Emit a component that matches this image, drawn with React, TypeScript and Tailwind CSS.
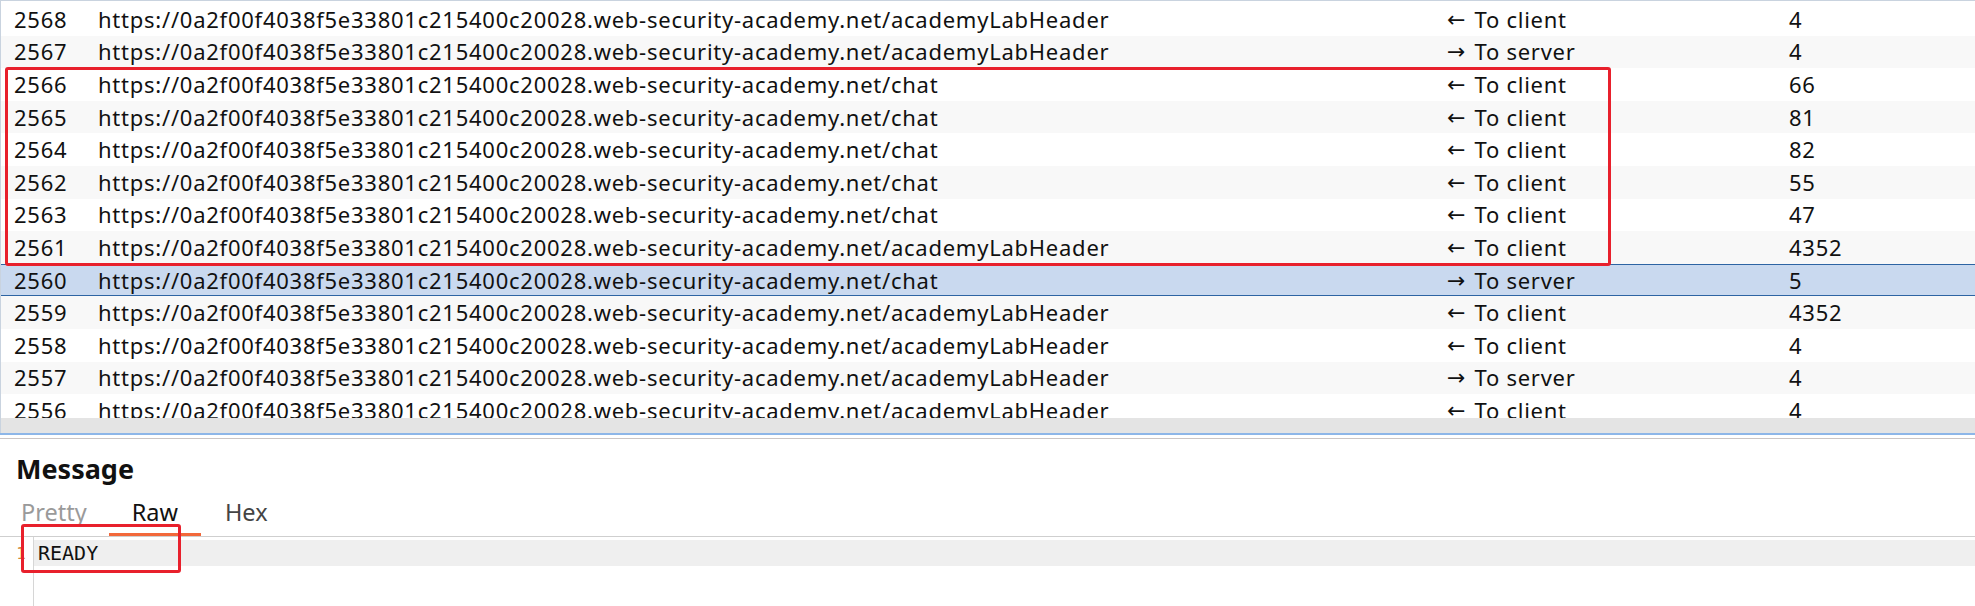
import React from 'react'

const HOST = 'https://0a2f00f4038f5e33801c215400c20028.web-security-academy.net'

type Row = { id: number; path: string; dir: 'in' | 'out'; len: number }

const ROWS: Row[] = [
  { id: 2568, path: '/academyLabHeader', dir: 'in', len: 4 },
  { id: 2567, path: '/academyLabHeader', dir: 'out', len: 4 },
  { id: 2566, path: '/chat', dir: 'in', len: 66 },
  { id: 2565, path: '/chat', dir: 'in', len: 81 },
  { id: 2564, path: '/chat', dir: 'in', len: 82 },
  { id: 2562, path: '/chat', dir: 'in', len: 55 },
  { id: 2563, path: '/chat', dir: 'in', len: 47 },
  { id: 2561, path: '/academyLabHeader', dir: 'in', len: 4352 },
  { id: 2560, path: '/chat', dir: 'out', len: 5 },
  { id: 2559, path: '/academyLabHeader', dir: 'in', len: 4352 },
  { id: 2558, path: '/academyLabHeader', dir: 'in', len: 4 },
  { id: 2557, path: '/academyLabHeader', dir: 'out', len: 4 },
  { id: 2556, path: '/academyLabHeader', dir: 'in', len: 4 },
]

const SELECTED = 2560

function HistoryRow({ row, index }: { row: Row; index: number }) {
  const selected = row.id === SELECTED
  const bg = selected
    ? 'bg-[#c9d9ef] border-y border-[#2d64a3]'
    : index % 2 === 1
      ? 'bg-[#f8f8f8]'
      : 'bg-white'
  return (
    <div className={`flex items-center h-[32.6px] shrink-0 pl-[13px] ${bg}`}>
      <div className="w-[84px]">{row.id}</div>
      <div className="w-[1349px] whitespace-nowrap">{HOST + row.path}</div>
      <div className="w-[342px] whitespace-nowrap flex items-center">
        <span className="font-['DejaVu_Sans',sans-serif] text-[22px] tracking-normal mr-[9px]">
          {row.dir === 'in' ? '←' : '→'}
        </span>
        {row.dir === 'in' ? 'To client' : 'To server'}
      </div>
      <div>{row.len}</div>
    </div>
  )
}

export default function App() {
  return (
    <div className="w-[1975px] h-[606px] bg-white overflow-hidden text-[#111] font-['Noto_Sans',sans-serif]">
      {/* history table */}
      <div className="border-l border-t border-[#c9d3df]">
        <div className="relative h-[417px] overflow-hidden pt-[2px] flex flex-col text-[22px] tracking-[0.75px]">
          {ROWS.map((r, i) => (
            <HistoryRow key={r.id} row={r} index={i} />
          ))}
          {/* annotation */}
          <div className="absolute left-[4px] top-[66px] w-[1606px] h-[199px] border-[3px] border-[#e8202c] rounded-[3px]" />
        </div>
        <div className="h-[15px] bg-[#e4e4e4]" />
      </div>
      <div className="h-[2px] bg-[#8db6e8]" />
      <div className="h-[3px]" />
      <div className="h-px bg-[#cbc5c5]" />

      {/* message panel */}
      <div className="relative">
        <div className="pl-[16px] pt-[14px] h-[50px] text-[27px] font-bold leading-none flex items-start">
          <span className="mt-[2px]">Message</span>
        </div>
        <div className="flex text-[23.5px] h-[48px] items-center border-b border-[#cfcfcf]">
          <div className="pl-[21px] pr-[22px] h-full flex items-center text-[#9a9a9a]">Pretty</div>
          <div className="px-[23px] h-full flex items-center relative">
            Raw
            <div className="absolute left-0 right-0 bottom-0 h-[3px] bg-[#f2683a]" />
          </div>
          <div className="px-[24px] h-full flex items-center text-[#444]">Hex</div>
        </div>
        <div className="flex h-[80px]">
          <div className="w-[34px] border-r border-[#d6d6d6] text-[16px] text-right pr-[7px] pt-[5px] text-[#d08a3a] font-['DejaVu_Sans_Mono',monospace]">
            1
          </div>
          <div className="flex-1 pt-[3px]">
            <div className="h-[26px] bg-[#efefef] flex items-center pl-[4px] text-[20px] font-['DejaVu_Sans_Mono',monospace] text-[#111]">
              READY
            </div>
          </div>
        </div>
        {/* annotation */}
        <div className="absolute left-[21px] top-[85px] w-[160px] h-[49px] border-[3px] border-[#e8202c] rounded-[3px]" />
      </div>
    </div>
  )
}
